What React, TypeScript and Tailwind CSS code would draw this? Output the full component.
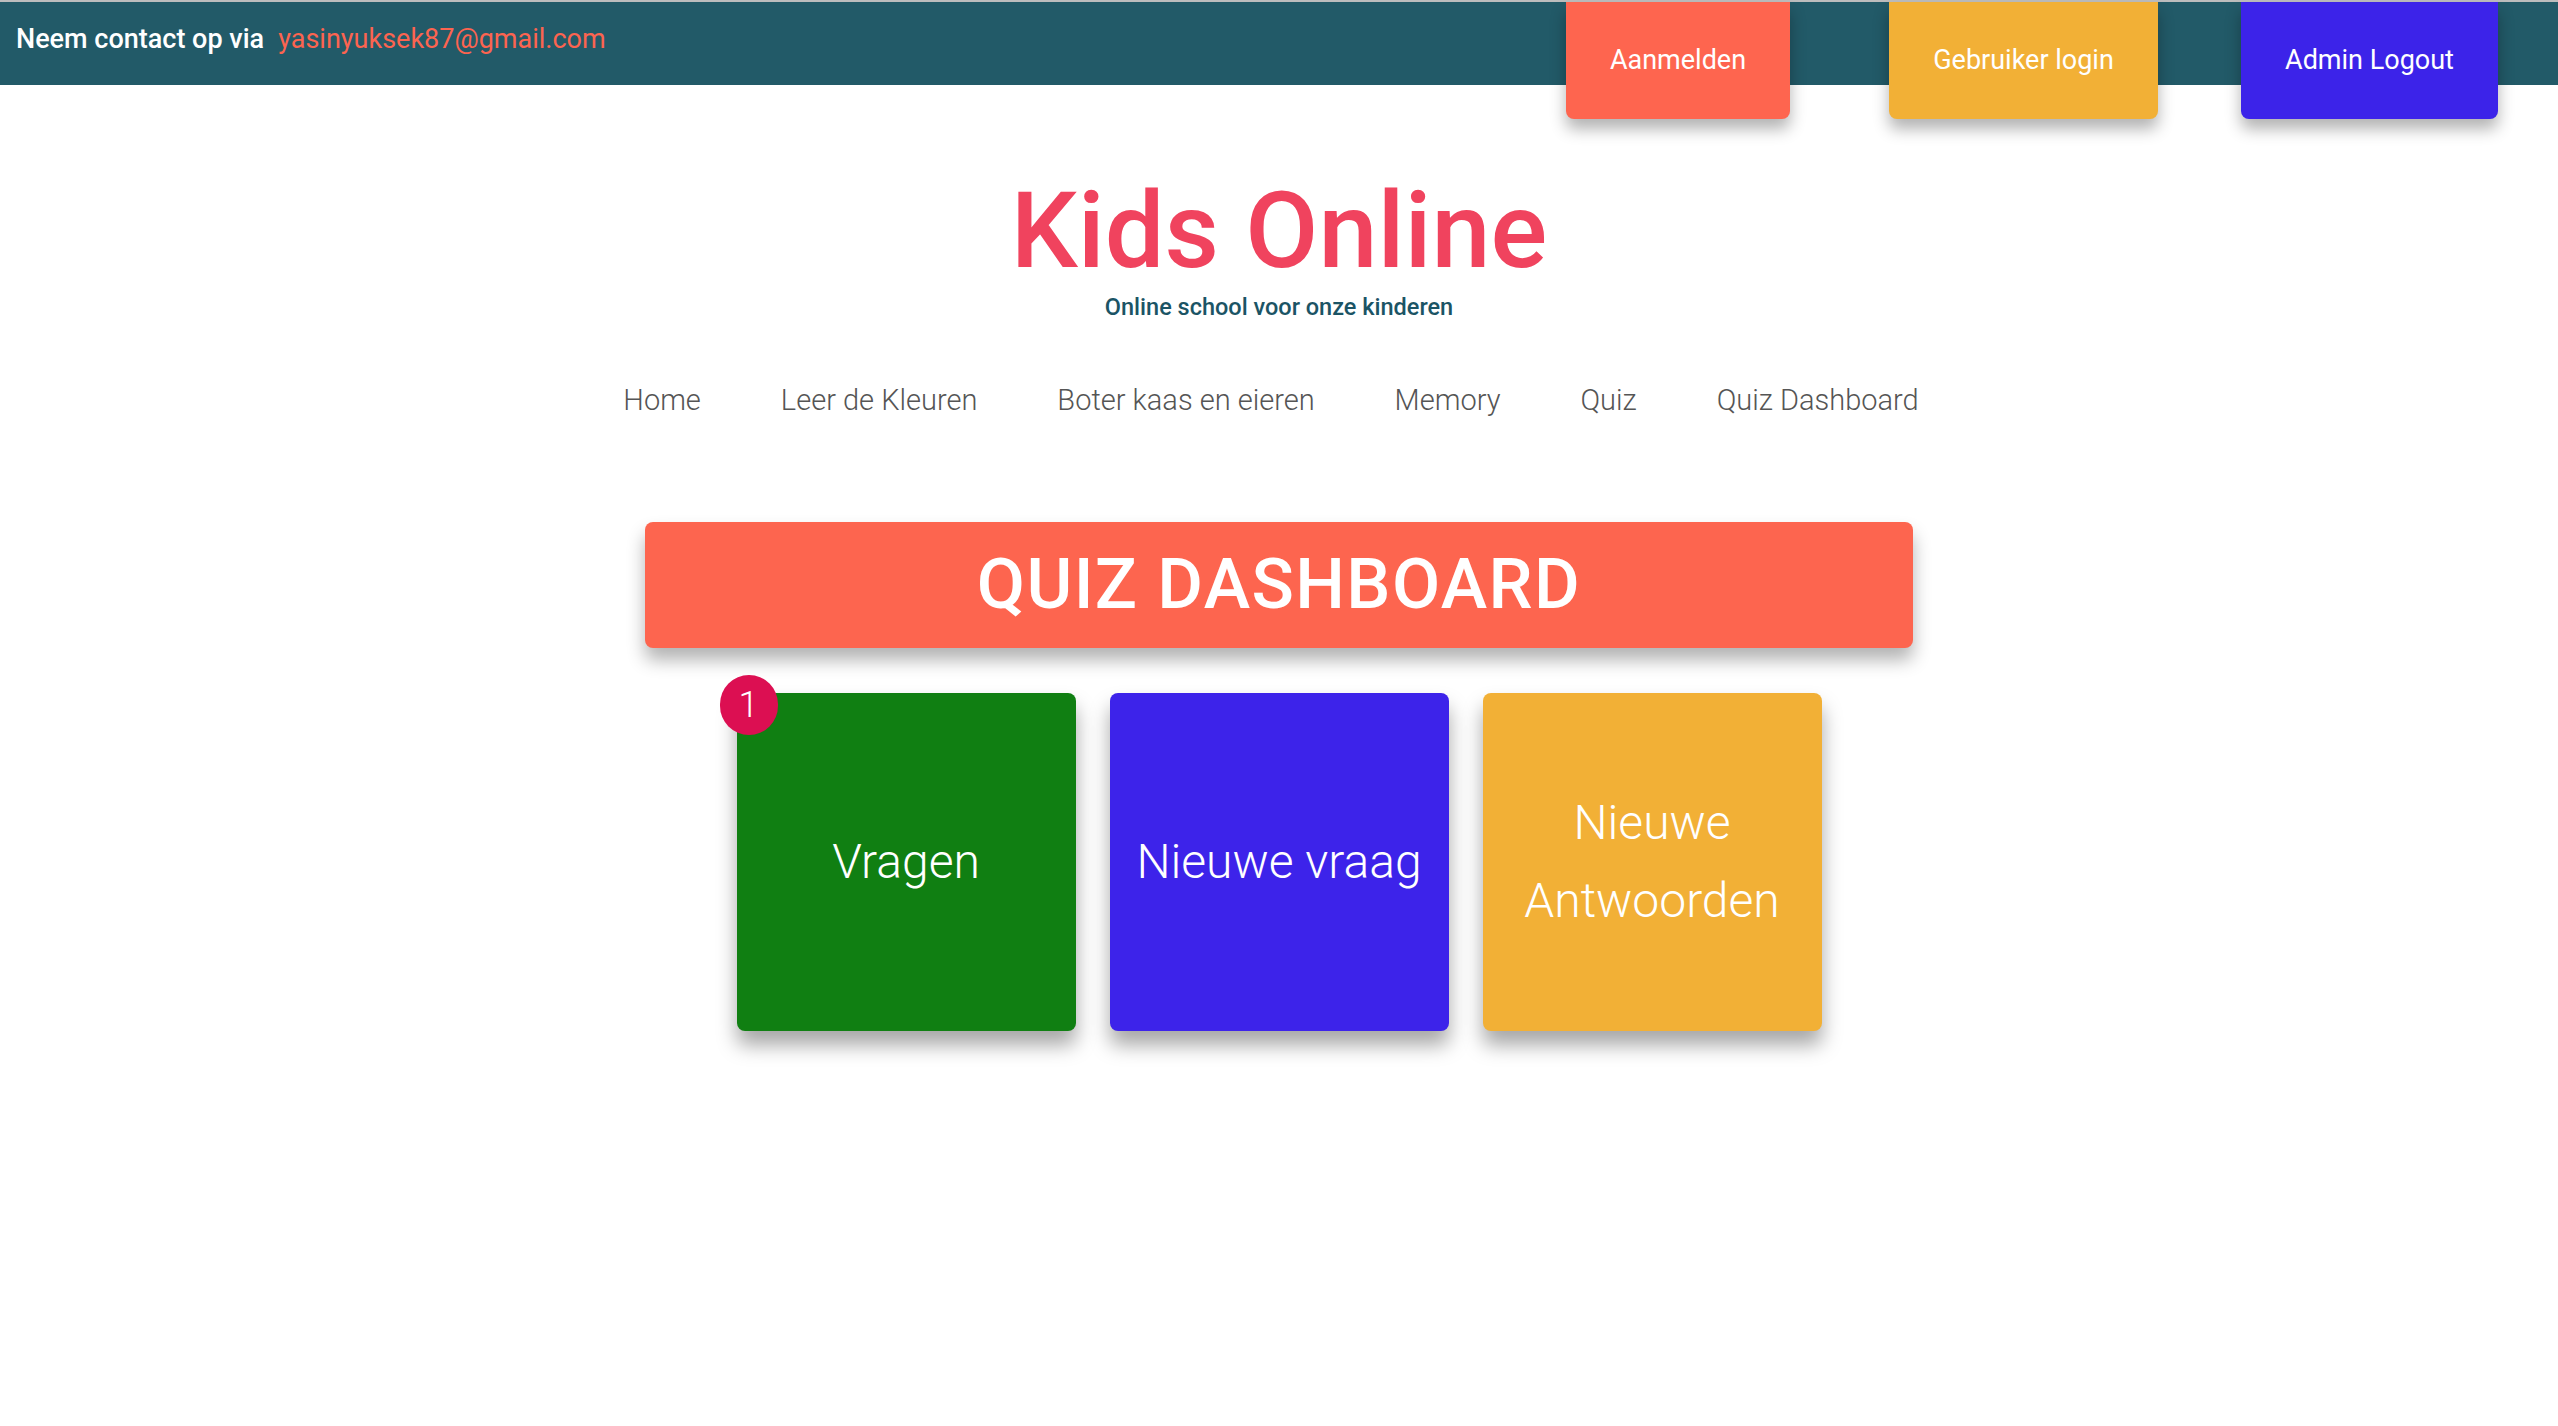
import React from "react";

const navItems = ["Home", "Leer de Kleuren", "Boter kaas en eieren", "Memory", "Quiz", "Quiz Dashboard"];

const authButtons = [
  { label: "Aanmelden", className: "bg-[#fe654f] w-[224px]" },
  { label: "Gebruiker login", className: "bg-[#f2b036] w-[269px] ml-[99px]" },
  { label: "Admin Logout", className: "bg-[#3c23e9] w-[257px] ml-[83px]" },
];

function TopBar() {
  return (
    <div className="flex h-[85px] bg-[#225a68] border-t-2 border-[#bdbdbd]">
      <div className="flex items-center pl-4 pb-2 text-[27px]">
        <span className="font-medium text-white">Neem contact op via</span>
        <span className="ml-[14px] text-[#fc6450]">yasinyuksek87@gmail.com</span>
      </div>
      <div className="ml-auto mr-[60px] flex items-start">
        {authButtons.map((b) => (
          <button
            key={b.label}
            className={`relative z-10 flex h-[117px] items-center justify-center rounded-b-lg text-[27px] text-white shadow-[0_10px_16px_rgba(0,0,0,0.3)] ${b.className}`}
          >
            {b.label}
          </button>
        ))}
      </div>
    </div>
  );
}

function Card({ color, children, badge }: { color: string; children: React.ReactNode; badge?: string }) {
  return (
    <div
      className={`relative flex h-[338px] w-[339px] items-center justify-center rounded-lg text-center text-[48px] font-light leading-[78px] text-white shadow-[0_14px_20px_rgba(0,0,0,0.35)] ${color}`}
    >
      {badge && (
        <span className="absolute -left-[17px] -top-[18px] flex h-[60px] w-[58px] items-center justify-center rounded-full bg-[#dc0f52] text-[36px] font-light leading-none text-white">
          {badge}
        </span>
      )}
      {children}
    </div>
  );
}

export default function App() {
  return (
    <div className="min-h-[1426px] bg-white font-['Roboto','Liberation_Sans',sans-serif]">
      <TopBar />

      <header className="flex flex-col items-center">
        <h1 className="mt-[93px] text-[106px] font-medium leading-none text-[#f0435e]">Kids Online</h1>
        <p className="mt-[12px] text-[23.5px] font-medium leading-none text-[#1b5465]">
          Online school voor onze kinderen
        </p>
      </header>

      <nav className="mt-[66px] flex justify-center gap-[80px] pr-4 text-[29px] font-light leading-none text-[#555]">
        {navItems.map((item) => (
          <a key={item} href="#">
            {item}
          </a>
        ))}
      </nav>

      <main className="flex flex-col items-center">
        <div className="mt-[107px] flex h-[126px] w-[1268px] items-center justify-center rounded-lg bg-[#fd654f] shadow-[0_12px_18px_rgba(0,0,0,0.3)]">
          <h2 className="text-[70px] font-medium tracking-[0.02em] text-white">QUIZ DASHBOARD</h2>
        </div>

        <div className="mt-[45px] flex gap-[34px]">
          <Card color="bg-[#107f12]" badge="1">
            Vragen
          </Card>
          <Card color="bg-[#3d23ea]">Nieuwe vraag</Card>
          <Card color="bg-[#f2b036]">
            Nieuwe
            <br />
            Antwoorden
          </Card>
        </div>
      </main>
    </div>
  );
}
